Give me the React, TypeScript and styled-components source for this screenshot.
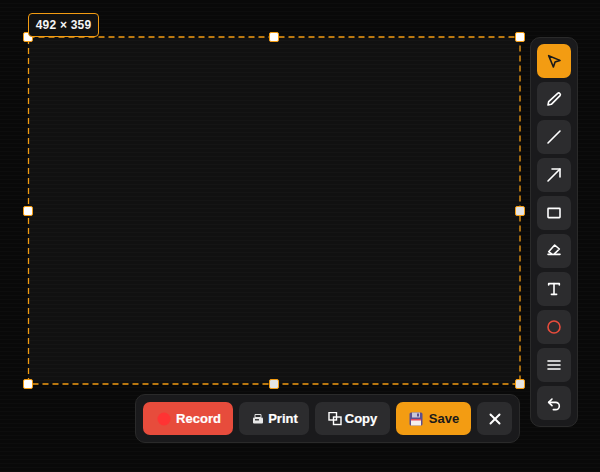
import React from 'react';
import styled, { createGlobalStyle } from 'styled-components';

const GlobalStyle = createGlobalStyle`
  html, body {
    margin: 0;
    padding: 0;
    background: #0a0a0a;
    overflow: hidden;
  }
`;

const Stage = styled.div`
  position: relative;
  width: 600px;
  height: 472px;
  overflow: hidden;
  font-family: 'Liberation Sans', Arial, sans-serif;
  background: repeating-linear-gradient(to bottom, #090909 0, #090909 3px, #0d0d0d 3px, #0d0d0d 4px);
`;

const Selection = styled.div`
  position: absolute;
  left: 28px;
  top: 37px;
  width: 492px;
  height: 347px;
  box-sizing: border-box;
  background: repeating-linear-gradient(to bottom, #111111 0, #111111 3px, #151515 3px, #151515 4px);
`;

const DashedFrame = styled.svg`
  position: absolute;
  left: 26px;
  top: 35px;
`;

const SizeLabel = styled.div`
  position: absolute;
  left: 28px;
  top: 13px;
  width: 71px;
  height: 24px;
  box-sizing: border-box;
  display: flex;
  align-items: center;
  justify-content: center;
  border: 1px solid #f39c12;
  border-radius: 4px;
  background: #111111;
  color: #f4f4f4;
  font-size: 12px;
  font-weight: 700;
  letter-spacing: 0.2px;
  white-space: nowrap;
`;

const Handle = styled.div<{ $x: number; $y: number; $dim?: boolean }>`
  position: absolute;
  left: ${p => p.$x - 5}px;
  top: ${p => p.$y - 5}px;
  width: 10px;
  height: 10px;
  box-sizing: border-box;
  border: 1px solid #f39c12;
  border-radius: 2px;
  background: ${p => (p.$dim ? '#e4e4e4' : '#ffffff')};
`;

const SideBar = styled.div`
  position: absolute;
  left: 530px;
  top: 37px;
  width: 48px;
  height: 390px;
  box-sizing: border-box;
  padding: 6px;
  display: flex;
  flex-direction: column;
  gap: 4px;
  border: 1px solid #2a2a2a;
  border-radius: 10px;
  background: #1a1a1c;
`;

const ToolButton = styled.div<{ $active?: boolean }>`
  width: 34px;
  height: 34px;
  flex: none;
  display: flex;
  align-items: center;
  justify-content: center;
  border-radius: 7px;
  background: ${p => (p.$active ? '#f39c12' : '#2c2c2e')};
  color: ${p => (p.$active ? '#1a1a1a' : '#ffffff')};
`;

const ActionBar = styled.div`
  position: absolute;
  left: 135px;
  top: 394px;
  width: 385px;
  height: 49px;
  box-sizing: border-box;
  padding: 7px;
  display: flex;
  gap: 6px;
  border: 1px solid #2a2a2a;
  border-radius: 10px;
  background: #1a1a1c;
`;

type Tone = 'record' | 'plain' | 'save';

const toneBg: Record<Tone, string> = {
  record: '#e74c3c',
  plain: '#2c2c2e',
  save: '#f39c12'
};

const ActionButton = styled.div<{ $tone: Tone; $width: number; $gap: number; $inset?: number }>`
  width: ${p => p.$width}px;
  height: 33px;
  flex: none;
  box-sizing: border-box;
  padding-left: ${p => p.$inset ?? 0}px;
  display: flex;
  align-items: center;
  justify-content: center;
  gap: ${p => p.$gap}px;
  border-radius: 7px;
  background: ${p => toneBg[p.$tone]};
  color: ${p => (p.$tone === 'save' ? '#1a1a1a' : '#ffffff')};
  font-size: 13px;
  font-weight: 700;
  -webkit-text-stroke: ${p => (p.$tone === 'save' ? '0' : '0.2px')};
`;

const Icon: React.FC<{ children: React.ReactNode; size?: number }> = ({ children, size = 16 }) => (
  <svg
    width={size}
    height={size}
    viewBox="0 0 24 24"
    fill="none"
    stroke="currentColor"
    strokeWidth={2.4}
    strokeLinecap="round"
    strokeLinejoin="round"
  >
    {children}
  </svg>
);

const tools = [
  <path key="a" d="M4 4l7.07 17 2.51-7.39L21 11.07z" />,
  <path key="b" d="M17.5 3.5a2.5 2.5 0 0 1 3.5 3.5L8 20l-5 1 1-5z" />,
  <line key="c" x1="3" y1="21" x2="21" y2="3" />,
  <g key="d"><line x1="3" y1="21" x2="21" y2="3" /><polyline points="9 3 21 3 21 15" /></g>,
  <rect key="e" x="3" y="5" width="18" height="14" rx="1" />,
  <g key="f"><path d="M8 16l-4-3L13 3l7 6-7 7" /><line x1="3" y1="17" x2="21" y2="17" /></g>,
  <g key="g"><polyline points="4 6 4 4 20 4 20 6" /><line x1="12" y1="4" x2="12" y2="20" /><line x1="8" y1="20" x2="16" y2="20" /></g>,
  <circle key="h" cx="12" cy="12" r="9" stroke="#e74c3c" />,
  <g key="i"><line x1="3" y1="6" x2="21" y2="6" /><line x1="3" y1="12" x2="21" y2="12" /><line x1="3" y1="18" x2="21" y2="18" /></g>,
  <g key="j"><polyline points="9 16 4 11 9 6" /><path d="M4 11h10.5a5.5 5.5 0 0 1 0 11H11" /></g>
];

const handles: { x: number; y: number; dim?: boolean }[] = [
  { x: 28, y: 37 },
  { x: 274, y: 37 },
  { x: 520, y: 37 },
  { x: 28, y: 211 },
  { x: 520, y: 211, dim: true },
  { x: 28, y: 384 },
  { x: 274, y: 384, dim: true },
  { x: 520, y: 384, dim: true }
];

export default function App() {
  return (
    <Stage>
      <GlobalStyle />
      <Selection />
      <DashedFrame width={496} height={351}>
        <rect x="2.5" y="2" width="491.5" height="347" fill="none" stroke="#f39c12" strokeWidth="1.3" strokeDasharray="6 4" />
      </DashedFrame>
      {handles.map(h => (
        <Handle key={`${h.x}-${h.y}`} $x={h.x} $y={h.y} $dim={h.dim} />
      ))}
      <SizeLabel>492 × 359</SizeLabel>

      <SideBar>
        {tools.map((tool, i) => (
          <ToolButton key={i} $active={i === 0}>
            <Icon>{tool}</Icon>
          </ToolButton>
        ))}
      </SideBar>

      <ActionBar>
        <ActionButton $tone="record" $width={90} $gap={5} $inset={2}>
          <svg width="14" height="14" viewBox="0 0 14 14">
            <circle cx="7" cy="7" r="6.5" fill="#ff3333" />
          </svg>
          <span>Record</span>
        </ActionButton>
        <ActionButton $tone="plain" $width={70} $gap={4} $inset={2}>
          <svg width="12" height="12" viewBox="0 0 12 12">
            <path d="M3 1.5h6v3H3z" fill="none" stroke="#ddd" strokeWidth="1" />
            <rect x="1" y="4.5" width="10" height="6" rx="1" fill="#e8e8e8" />
            <rect x="3" y="6" width="4" height="1.5" fill="#444" />
          </svg>
          <span>Print</span>
        </ActionButton>
        <ActionButton $tone="plain" $width={75} $gap={3}>
          <svg width="14" height="14" viewBox="0 0 14 14" fill="none" stroke="#fff" strokeWidth="1.4">
            <rect x="1" y="0.5" width="7.5" height="7.5" />
            <rect x="5.5" y="5" width="7.5" height="7.5" />
          </svg>
          <span>Copy</span>
        </ActionButton>
        <ActionButton $tone="save" $width={75} $gap={6} $inset={1}>
          <svg width="14" height="14" viewBox="0 0 14 14">
            <rect x="0.5" y="0.5" width="13" height="13" rx="1.5" fill="#5c4f8f" />
            <rect x="3" y="0.5" width="8" height="5" fill="#c9c6d8" />
            <rect x="8" y="1.5" width="2" height="3" fill="#5c4f8f" />
            <rect x="2" y="7" width="10" height="6.5" fill="#f4f0ee" />
            <rect x="2" y="7" width="10" height="1.5" fill="#e8475a" />
          </svg>
          <span>Save</span>
        </ActionButton>
        <ActionButton $tone="plain" $width={35} $gap={0}>
          <svg width="12" height="12" viewBox="0 0 12 12" stroke="#fff" strokeWidth="2" strokeLinecap="round">
            <line x1="1.5" y1="1.5" x2="10.5" y2="10.5" />
            <line x1="10.5" y1="1.5" x2="1.5" y2="10.5" />
          </svg>
        </ActionButton>
      </ActionBar>
    </Stage>
  );
}
